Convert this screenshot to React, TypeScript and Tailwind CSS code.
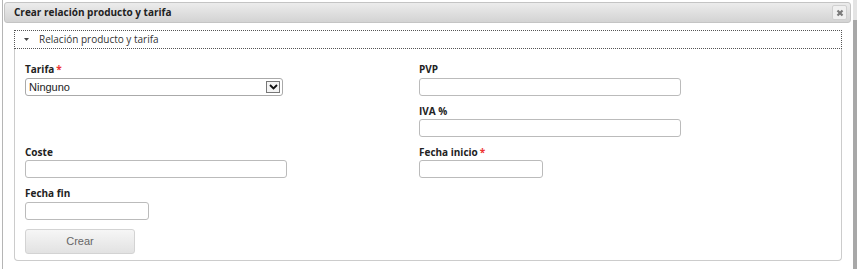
import React from "react";

const labelCls = "text-[10px] font-bold text-[#222] leading-[10px] h-[12px] [font-family:'Open_Sans',sans-serif]";
const inputCls = "h-[18px] border border-[#bbb] rounded-[3px] bg-white";

function Label({ text, req }: { text: string; req?: boolean }) {
  return (
    <div className={labelCls}>
      {text}
      {req && <span className="text-[#e33] ml-[2px]">*</span>}
    </div>
  );
}

export default function App() {
  return (
    <div className="w-[857px] h-[269px] bg-white flex overflow-hidden">
      <div className="w-[2px]" />
      <div className="w-[851px] h-full border-l border-[#b5b5b5] pl-[1px] pt-[2px] flex flex-col">
        <div className="h-[21px] mr-[2px] border border-[#c4c4c4] rounded-[3px] bg-gradient-to-b from-[#ececec] to-[#d3d3d3] flex items-center justify-between pl-[9px] pr-[3px]">
          <span className="text-[10px] font-bold text-[#222] [font-family:'Open_Sans',sans-serif]">Crear relación producto y tarifa</span>
          <span className="w-[15px] h-[15px] border border-[#d0d0d0] rounded-[2px] bg-[#f0f0f0] flex items-center justify-center">
            <svg width="8" height="8" viewBox="0 0 8 8"><path d="M1.5 1.5 L6.5 6.5 M6.5 1.5 L1.5 6.5" stroke="#7a7a7a" strokeWidth="2.2" /></svg>
          </span>
        </div>
        <div className="ml-[10px] mr-[11px] mt-[7px] flex flex-col">
          <div className="h-[19px] border border-dotted border-[#555] flex items-center pl-[9px]">
            <svg width="5" height="3" viewBox="0 0 5 3" className="mr-[10px]"><path d="M0 0 L5 0 L2.5 3 Z" fill="#444" /></svg>
            <span className="text-[10px] text-[#333] [font-family:'Open_Sans',sans-serif]">Relación producto y tarifa</span>
          </div>
          <div className="h-[212px] border border-t-0 border-[#ccc] rounded-b-[4px] pl-[10px] pt-[15px] flex">
            <div className="w-[394px] flex flex-col">
              <Label text="Tarifa" req />
              <div className="mt-[2px] w-[258px] h-[18px] border border-[#aaa] rounded-[3px] bg-white flex items-center justify-between pl-[3px] pr-[2px]">
                <span className="text-[11px] text-[#222] [font-family:'Liberation_Sans',sans-serif]">Ninguno</span>
                <span className="w-[14px] h-[12px] border border-[#777] bg-[#f4f4f4] flex items-center justify-center">
                  <svg width="9" height="6" viewBox="0 0 9 6"><path d="M1 1 L4.5 4.5 L8 1" stroke="#111" strokeWidth="1.8" fill="none" /></svg>
                </span>
              </div>
              <div className="h-[51px]" />
              <Label text="Coste" />
              <div className={`mt-[1px] w-[262px] ${inputCls}`} />
              <div className="h-[10px]" />
              <Label text="Fecha fin" />
              <div className={`mt-[2px] w-[124px] ${inputCls}`} />
              <div className="mt-[9px] w-[110px] h-[25px] border border-[#d3d3d3] rounded-[3px] bg-gradient-to-b from-[#f6f6f6] to-[#e2e2e2] flex items-center justify-center text-[11px] text-[#666] [font-family:'Liberation_Sans',sans-serif]">Crear</div>
            </div>
            <div className="flex flex-col">
              <Label text="PVP" />
              <div className={`mt-[2px] w-[262px] ${inputCls}`} />
              <div className="h-[10px]" />
              <Label text="IVA %" />
              <div className={`mt-[1px] w-[262px] ${inputCls}`} />
              <div className="h-[10px]" />
              <Label text="Fecha inicio" req />
              <div className={`mt-[1px] w-[124px] ${inputCls}`} />
            </div>
          </div>
        </div>
      </div>
      <div className="w-[4px] h-full flex flex-col">
        <div className="h-[20px] bg-[#e4e4e4]" />
        <div className="flex-1 bg-[#a8a8a8]" />
      </div>
    </div>
  );
}
